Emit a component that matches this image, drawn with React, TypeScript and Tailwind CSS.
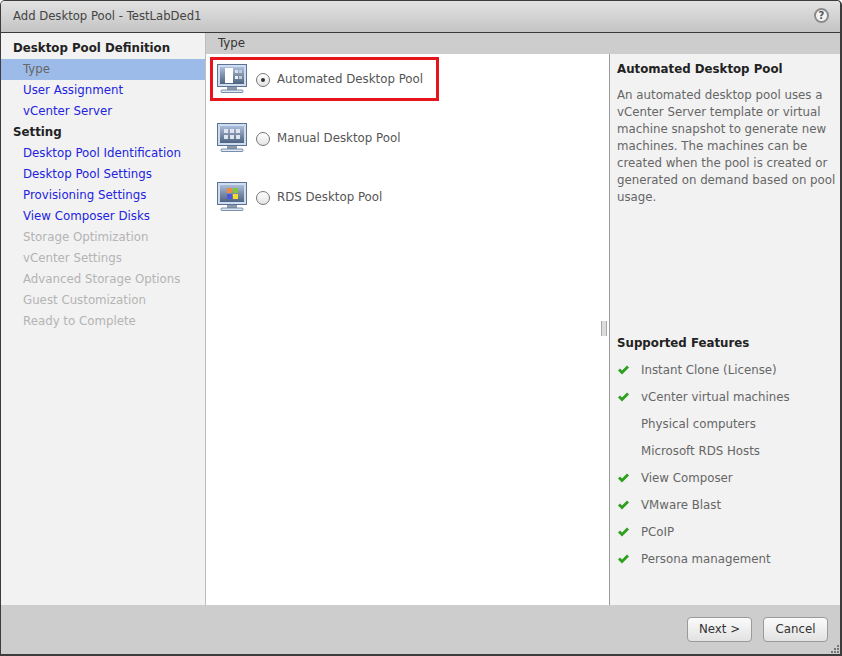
import React from 'react';

type NavItem = { label: string; kind: 'head' | 'active' | 'link' | 'off' };

const navItems: NavItem[] = [
  { label: 'Desktop Pool Definition', kind: 'head' },
  { label: 'Type', kind: 'active' },
  { label: 'User Assignment', kind: 'link' },
  { label: 'vCenter Server', kind: 'link' },
  { label: 'Setting', kind: 'head' },
  { label: 'Desktop Pool Identification', kind: 'link' },
  { label: 'Desktop Pool Settings', kind: 'link' },
  { label: 'Provisioning Settings', kind: 'link' },
  { label: 'View Composer Disks', kind: 'link' },
  { label: 'Storage Optimization', kind: 'off' },
  { label: 'vCenter Settings', kind: 'off' },
  { label: 'Advanced Storage Options', kind: 'off' },
  { label: 'Guest Customization', kind: 'off' },
  { label: 'Ready to Complete', kind: 'off' },
];

const features = [
  { label: 'Instant Clone (License)', ok: true },
  { label: 'vCenter virtual machines', ok: true },
  { label: 'Physical computers', ok: false },
  { label: 'Microsoft RDS Hosts', ok: false },
  { label: 'View Composer', ok: true },
  { label: 'VMware Blast', ok: true },
  { label: 'PCoIP', ok: true },
  { label: 'Persona management', ok: true },
];

const navClass = {
  head: 'pl-3 font-bold text-[#222]',
  active: 'pl-[22px] bg-[#9dbbe8] text-[#666]',
  link: 'pl-[22px] text-[#2222e0]',
  off: 'pl-[22px] text-[#b4b4b4]',
};

const Monitor = ({ variant }: { variant: 'auto' | 'manual' | 'rds' }) => (
  <svg width="30" height="30" viewBox="0 0 30 30" className="shrink-0">
    <defs>
      <linearGradient id={`scr-${variant}`} x1="0" y1="0" x2="0" y2="1">
        <stop offset="0" stopColor="#a9bedd" />
        <stop offset="0.5" stopColor="#7f8ea6" />
        <stop offset="1" stopColor="#4d6484" />
      </linearGradient>
    </defs>
    <rect x="0.5" y="0.5" width="29" height="22" fill="#cfdcee" stroke="#5a7397" />
    <rect x="3" y="3" width="24" height="17" fill={`url(#scr-${variant})`} />
    <rect x="10" y="23" width="10" height="3" fill="#8d99ab" />
    <rect x="4" y="26" width="22" height="2.5" rx="1" fill="#dfe7f2" stroke="#5a7397" strokeWidth="0.8" />
    {variant === 'auto' && (
      <g>
        <rect x="8" y="4" width="8" height="15" fill="#fff" />
        <rect x="18" y="6" width="3" height="3" fill="#dde3ee" />
        <rect x="22" y="6" width="3" height="3" fill="#c3ccdb" />
        <rect x="18" y="12" width="3" height="3" fill="#eef1f6" />
        <rect x="22" y="12" width="3" height="3" fill="#c3ccdb" />
      </g>
    )}
    {variant === 'manual' && (
      <g fill="#dfe5f0">
        <rect x="7" y="6" width="4" height="4" />
        <rect x="13" y="6" width="4" height="4" />
        <rect x="19" y="6" width="4" height="4" />
        <rect x="7" y="12" width="4" height="4" />
        <rect x="13" y="12" width="4" height="4" />
        <rect x="19" y="12" width="4" height="4" />
      </g>
    )}
    {variant === 'rds' && (
      <g>
        <rect x="10" y="6" width="5" height="5" fill="#f08a3c" />
        <rect x="16" y="6" width="5" height="5" fill="#86c440" />
        <rect x="10" y="12" width="5" height="5" fill="#4a55e0" />
        <rect x="16" y="12" width="5" height="5" fill="#f5dc2a" />
      </g>
    )}
  </svg>
);

const Radio = ({ checked }: { checked?: boolean }) => (
  <span className="flex h-[14px] w-[14px] shrink-0 items-center justify-center rounded-full border border-[#777] bg-gradient-to-b from-[#fff] to-[#e4e4e4]">
    {checked && <span className="h-1 w-1 rounded-full bg-[#333]" />}
  </span>
);

const PoolOption = ({
  variant,
  label,
  checked,
  className,
}: {
  variant: 'auto' | 'manual' | 'rds';
  label: string;
  checked?: boolean;
  className: string;
}) => (
  <div className={`flex items-center ${className}`}>
    <Monitor variant={variant} />
    <span className="mt-[2px] ml-[9px] flex">
      <Radio checked={checked} />
    </span>
    <span className="mt-[2px] ml-[7px] text-[#555]">{label}</span>
  </div>
);

const Check = () => (
  <svg width="13" height="10" viewBox="0 0 12 10" className="mb-[2px]">
    <path d="M0.5 5.5 L2.5 3.5 L4.5 5.5 L9.5 0.5 L11.5 2.5 L4.5 9.5 Z" fill="#2ea01e" />
  </svg>
);

const FooterButton = ({ label, className }: { label: string; className: string }) => (
  <button
    type="button"
    className={`h-[25px] rounded-[4px] border border-[#9a9a9a] bg-gradient-to-b from-[#fbfbfb] to-[#e2e2e2] text-[#333] ${className}`}
  >
    {label}
  </button>
);

export default function App() {
  return (
    <div className="h-[656px] w-[842px] bg-white font-['DejaVu_Sans','Liberation_Sans',sans-serif] text-[11.8px]">
      <div className="relative flex h-full flex-col overflow-hidden rounded-t-[5px] border-r-2 border-b-2 border-l border-t border-[#3c3c3c]">
        {/* title bar */}
        <div className="flex h-[32px] shrink-0 items-center justify-between border-b border-[#3a3a3a] bg-gradient-to-b from-[#e2e2e2] to-[#c4c4c4] pr-[11px] pl-3">
          <span className="text-[11.65px] text-[#444]">Add Desktop Pool - TestLabDed1</span>
          <span className="mb-[2px] flex h-[15px] w-[15px] items-center justify-center rounded-full border-2 border-[#8a8a8a] bg-[#f2f2f2] text-[10px] leading-none font-bold text-[#555]">
            ?
          </span>
        </div>

        <div className="flex min-h-0 flex-1">
          {/* wizard steps */}
          <div className="w-[205px] shrink-0 border-r border-[#bdbdbd] bg-[#f2f2f2] pt-[5px]">
            {navItems.map((item) => (
              <div key={item.label} className={`h-[21px] leading-[21px] ${navClass[item.kind]}`}>
                {item.label}
              </div>
            ))}
          </div>

          <div className="relative flex min-w-0 flex-1 flex-col">
            <div className="h-[21px] shrink-0 bg-[#cdcdcd] pl-3 leading-[21px] text-[#333]">Type</div>

            <div className="flex min-h-0 flex-1">
              {/* pool types */}
              <div className="w-[403px] shrink-0 bg-white pt-[3px] pl-[4px]">
                <div className="flex h-[44px] w-[229px] items-center border-[3px] border-[#e8141c] pl-[4px]">
                  <PoolOption variant="auto" label="Automated Desktop Pool" checked className="" />
                </div>
                <PoolOption variant="manual" label="Manual Desktop Pool" className="mt-[22px] ml-[7px]" />
                <PoolOption variant="rds" label="RDS Desktop Pool" className="mt-[29px] ml-[7px]" />
              </div>

              {/* description */}
              <div className="flex min-w-0 flex-1 flex-col border-l border-[#9a9a9a] bg-[#f2f2f2] pr-[2px] pl-[7px]">
                <div className="mt-[7px] leading-[17px] font-bold text-[#222]">Automated Desktop Pool</div>
                <p className="mt-[9px] leading-[17px] text-[#666]">
                  An automated desktop pool uses a vCenter Server template or virtual machine snapshot to generate new
                  machines. The machines can be created when the pool is created or generated on demand based on pool
                  usage.
                </p>
                <div className="mt-[129px] leading-[17px] font-bold text-[#222]">Supported Features</div>
                <div className="mt-[5px]">
                  {features.map((f) => (
                    <div key={f.label} className="flex h-[27px] items-center text-[#666]">
                      <span className="flex w-6 shrink-0 items-center">{f.ok && <Check />}</span>
                      {f.label}
                    </div>
                  ))}
                </div>
              </div>
            </div>

            {/* splitter handle */}
            <div className="absolute top-[288px] left-[395px] h-[15px] w-[6px] border-x border-[#aaa] bg-[#dcdcdc]" />
          </div>
        </div>

        {/* footer */}
        <div className="relative flex h-[49px] shrink-0 items-start justify-end gap-[11px] bg-[#cdcdcd] pt-[12px] pr-[12px]">
          <FooterButton label="Next >" className="w-[65px]" />
          <FooterButton label="Cancel" className="w-[65px]" />
          <svg width="10" height="10" viewBox="0 0 10 10" className="absolute right-0 bottom-0">
            <g fill="#777">
              <rect x="7" y="1" width="2" height="2" />
              <rect x="4" y="4" width="2" height="2" />
              <rect x="7" y="4" width="2" height="2" />
              <rect x="1" y="7" width="2" height="2" />
              <rect x="4" y="7" width="2" height="2" />
              <rect x="7" y="7" width="2" height="2" />
            </g>
          </svg>
        </div>
      </div>
    </div>
  );
}
